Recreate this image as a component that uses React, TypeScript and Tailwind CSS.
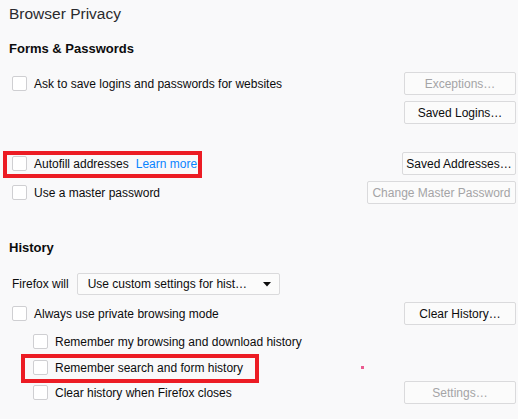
import React from "react";

const Check = ({ indent = false }: { indent?: boolean }) => (
  <div
    className={
      "w-[15px] h-[15px] shrink-0 rounded-[2px] border border-[#cfcfd2] bg-white " +
      (indent ? "ml-[33px]" : "ml-[12px]")
    }
  />
);

const Btn = ({
  children,
  w,
  disabled = false,
}: {
  children: React.ReactNode;
  w: string;
  disabled?: boolean;
}) => (
  <div
    className={
      "h-[23px] flex items-center justify-center whitespace-nowrap rounded-[2px] border border-[#dadadc] bg-[#fbfbfb] text-[12px] " +
      w +
      (disabled ? " text-[#a4a4a6]" : " text-[#0c0c0d]")
    }
  >
    {children}
  </div>
);

export default function App() {
  return (
    <div
      className="relative w-[518px] h-[419px] overflow-hidden bg-[#f9f9fa] text-[#0c0c0d]"
      style={{ fontFamily: '"Liberation Sans", Arial, sans-serif' }}
    >
      <div className="flex flex-col pr-[2px] whitespace-nowrap">
        <div className="pt-[4px] pl-[9px] text-[15.5px] leading-[20px] text-[#2a2a2e]">
          Browser Privacy
        </div>
        <div className="mt-[17px] pl-[9px] text-[13px] leading-[16px] font-bold">
          Forms &amp; Passwords
        </div>

        <div className="mt-[15px] h-[23px] flex items-center">
          <Check />
          <span className="ml-[7px] text-[12px]">
            Ask to save logins and passwords for websites
          </span>
          <div className="ml-auto">
            <Btn w="w-[112px]" disabled>
              Exceptions…
            </Btn>
          </div>
        </div>

        <div className="mt-[6px] h-[23px] flex items-center justify-end">
          <Btn w="w-[112px]">Saved Logins…</Btn>
        </div>

        <div className="mt-[28px] h-[23px] flex items-center">
          <Check />
          <span className="ml-[7px] text-[12px]">Autofill addresses</span>
          <span className="ml-[7px] text-[12px] text-[#0a84ff]">Learn more</span>
          <div className="ml-auto">
            <Btn w="w-[114px]">Saved Addresses…</Btn>
          </div>
        </div>

        <div className="mt-[6px] h-[23px] flex items-center">
          <Check />
          <span className="ml-[7px] text-[12px]">Use a master password</span>
          <div className="ml-auto">
            <Btn w="w-[149px]" disabled>
              Change Master Password
            </Btn>
          </div>
        </div>

        <div className="mt-[36px] pl-[9px] text-[13px] leading-[16px] font-bold">
          History
        </div>

        <div className="mt-[17px] h-[22px] flex items-center">
          <span className="ml-[12px] text-[12px]">Firefox will</span>
          <div className="ml-[8px] w-[203px] h-[22px] flex items-center rounded-[2px] border border-[#dadadc] bg-[#fbfbfb] pl-[10px] pr-[8px]">
            <span className="text-[12px] flex-1">Use custom settings for hist…</span>
            <svg width="8" height="5" viewBox="0 0 8 5">
              <path d="M0 0 L8 0 L4 4.5 Z" fill="#0c0c0d" />
            </svg>
          </div>
        </div>

        <div className="mt-[7px] h-[23px] flex items-center">
          <Check />
          <span className="ml-[7px] text-[12px]">Always use private browsing mode</span>
          <div className="ml-auto">
            <Btn w="w-[112px]">Clear History…</Btn>
          </div>
        </div>

        <div className="mt-[5px] h-[23px] flex items-center">
          <Check indent />
          <span className="ml-[7px] text-[12px]">
            Remember my browsing and download history
          </span>
        </div>

        <div className="mt-[3px] h-[23px] flex items-center">
          <Check indent />
          <span className="ml-[7px] text-[12px]">Remember search and form history</span>
        </div>

        <div className="mt-[2px] h-[23px] flex items-center">
          <Check indent />
          <span className="ml-[7px] text-[12px]">Clear history when Firefox closes</span>
          <div className="ml-auto">
            <Btn w="w-[112px]" disabled>
              Settings…
            </Btn>
          </div>
        </div>
      </div>

      <div className="absolute left-[3px] top-[151px] w-[199px] h-[27px] border-[4px] border-[#ec1c24]" />
      <div className="absolute left-[21px] top-[354px] w-[238px] h-[29px] border-[4px] border-[#ec1c24]" />
      <div className="absolute left-[361px] top-[366px] w-[3px] h-[3px] bg-[#ea5b8f]" />
    </div>
  );
}
